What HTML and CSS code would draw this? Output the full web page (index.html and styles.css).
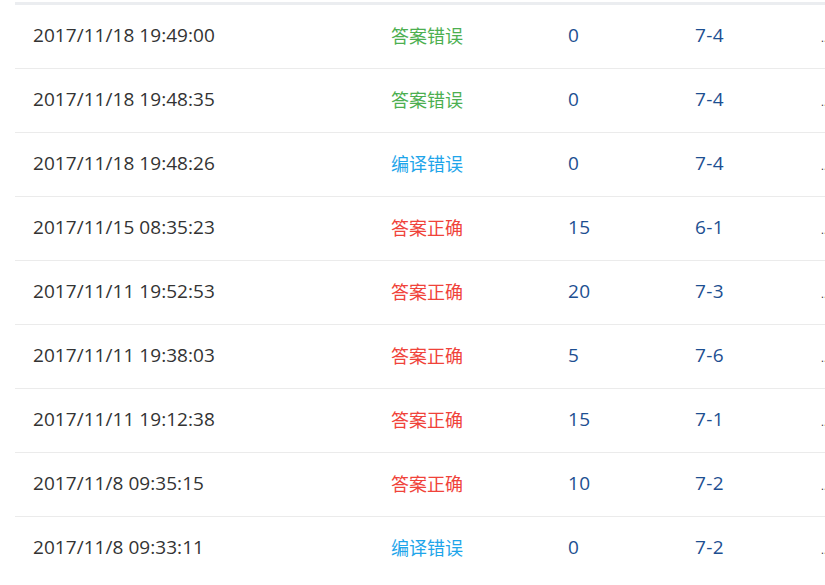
FILE: index.html
```html
<!DOCTYPE html>
<html lang="zh-CN">
<head>
<meta charset="utf-8">
<title>提交记录</title>
<link rel="stylesheet" href="styles.css">
</head>
<body>
<div class="wrap">
  <div class="topbar"></div>
  <div class="table">
    <div class="row"><div class="c date">2017/11/18 19:49:00</div><div class="c status wrong">答案错误</div><div class="c num">0</div><div class="c num">7-4</div><div class="c more">...</div></div>
    <div class="row"><div class="c date">2017/11/18 19:48:35</div><div class="c status wrong">答案错误</div><div class="c num">0</div><div class="c num">7-4</div><div class="c more">...</div></div>
    <div class="row"><div class="c date">2017/11/18 19:48:26</div><div class="c status compile">编译错误</div><div class="c num">0</div><div class="c num">7-4</div><div class="c more">...</div></div>
    <div class="row"><div class="c date">2017/11/15 08:35:23</div><div class="c status right">答案正确</div><div class="c num">15</div><div class="c num">6-1</div><div class="c more">...</div></div>
    <div class="row"><div class="c date">2017/11/11 19:52:53</div><div class="c status right">答案正确</div><div class="c num">20</div><div class="c num">7-3</div><div class="c more">...</div></div>
    <div class="row"><div class="c date">2017/11/11 19:38:03</div><div class="c status right">答案正确</div><div class="c num">5</div><div class="c num">7-6</div><div class="c more">...</div></div>
    <div class="row"><div class="c date">2017/11/11 19:12:38</div><div class="c status right">答案正确</div><div class="c num">15</div><div class="c num">7-1</div><div class="c more">...</div></div>
    <div class="row"><div class="c date">2017/11/8 09:35:15</div><div class="c status right">答案正确</div><div class="c num">10</div><div class="c num">7-2</div><div class="c more">...</div></div>
    <div class="row"><div class="c date">2017/11/8 09:33:11</div><div class="c status compile">编译错误</div><div class="c num">0</div><div class="c num">7-2</div><div class="c more">...</div></div>
  </div>
</div>
</body>
</html>
```
FILE: styles.css
```css
html, body {
  margin: 0;
  padding: 0;
  background: #fff;
  overflow: hidden;
}
body {
  font-family: "Open Sans", "Noto Sans CJK SC", sans-serif;
  font-size: 18px;
  color: #333;
}
.wrap {
  padding-top: 2px;
  margin-left: 15px;
  width: 810px;
  overflow: hidden;
}
.topbar {
  height: 3px;
  background: #ebedf0;
}
.row {
  display: grid;
  grid-template-columns: 358px 177px 127px 127px 21px;
  height: 63px;
  align-items: center;
  border-bottom: 1px solid #ebebeb;
}
.row:last-child {
  border-bottom-color: transparent;
}
.c {
  padding-left: 18px;
  padding-bottom: 3px;
  white-space: nowrap;
  overflow: hidden;
}
.date {
  color: #333;
  font-size: 19px;
  letter-spacing: 0.05px;
}
.wrong { color: #4caf50; }
.right { color: #f0433a; }
.compile { color: #1ea5ea; }
.num {
  color: #1d4f91;
  font-size: 19px;
  letter-spacing: 0.4px;
}
.more {
  color: #333;
  font-size: 11px;
  padding-left: 17px;
  padding-bottom: 0;
  padding-top: 2px;
}
```
